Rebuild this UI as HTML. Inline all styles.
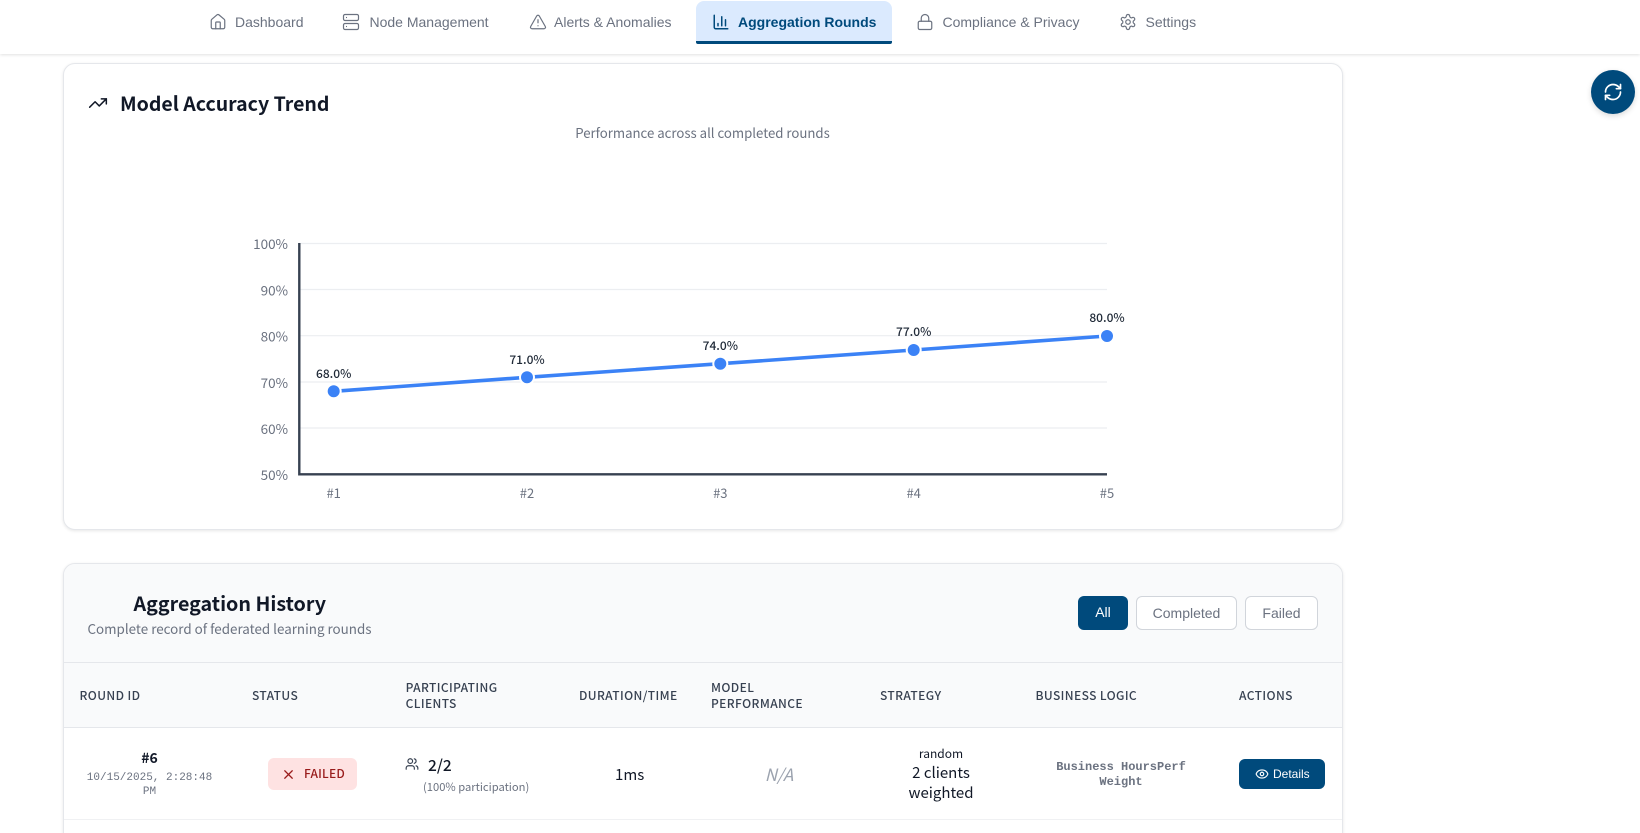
<!DOCTYPE html>
<html><head><meta charset="utf-8"><title>Aggregation Rounds</title>
<style>
html,body{margin:0;padding:0;background:#fff;width:1640px;height:833px;overflow:hidden}
body{position:relative;font-family:"Noto Sans CJK JP","Liberation Sans",sans-serif;color:#111827}
.t{position:absolute;white-space:nowrap;line-height:20px}
.c{transform:translateX(-50%)}
.n{font:14px/20px "Liberation Sans",Arial,sans-serif;color:#6b7280;top:12px}
.th{font-size:12px;font-weight:500;letter-spacing:.4px;color:#374151;line-height:16px}
.m{font-family:"Liberation Mono",monospace}
svg.i{position:absolute;fill:none;stroke:currentColor;stroke-width:2;stroke-linecap:round;stroke-linejoin:round}
.box{position:absolute;box-sizing:border-box}
.f{font:14px/32px "Liberation Sans",Arial,sans-serif;text-align:center;border-radius:6px;top:596px;height:34px}
</style></head><body>
<div class="box" style="left:0;top:0;width:1640px;height:54px;background:#fff;box-shadow:0 1px 3px rgba(0,0,0,.12);z-index:2"></div>
<div style="position:absolute;left:0;top:0;width:1640px;height:54px;z-index:3">
<div class="box" style="left:696px;top:1px;width:196px;height:43px;background:#dbeafe;border-radius:8px 8px 2px 2px;border-bottom:3px solid #004a7c"></div>
<svg class="i" style="left:209px;top:13px;color:#6b7280;stroke-width:1.6" width="18" height="18" viewBox="0 0 24 24"><path d="M15 21v-8a1 1 0 0 0-1-1h-4a1 1 0 0 0-1 1v8"/><path d="M3 10a2 2 0 0 1 .709-1.528l7-5.999a2 2 0 0 1 2.582 0l7 5.999A2 2 0 0 1 21 10v9a2 2 0 0 1-2 2H5a2 2 0 0 1-2-2z"/></svg>
<span class="t n" style="left:235px">Dashboard</span>
<svg class="i" style="left:342px;top:13px;color:#6b7280;stroke-width:1.6" width="18" height="18" viewBox="0 0 24 24"><rect x="2" y="2" width="20" height="8" rx="2"/><rect x="2" y="14" width="20" height="8" rx="2"/><path d="M6 6h.01M6 18h.01"/></svg>
<span class="t n" style="left:369.5px">Node Management</span>
<svg class="i" style="left:529px;top:13px;color:#6b7280;stroke-width:1.6" width="18" height="18" viewBox="0 0 24 24"><path d="m21.73 18-8-14a2 2 0 0 0-3.48 0l-8 14A2 2 0 0 0 4 21h16a2 2 0 0 0 1.73-3"/><path d="M12 9v4M12 17h.01"/></svg>
<span class="t n" style="left:554px">Alerts &amp; Anomalies</span>
<svg class="i" style="left:712px;top:13px;color:#004a7c" width="18" height="18" viewBox="0 0 24 24"><path d="M3 3v16a2 2 0 0 0 2 2h16"/><path d="M8 17v-3M13 17V5M18 17V9"/></svg>
<span class="t n" style="left:738px;color:#004a7c;font-weight:700">Aggregation Rounds</span>
<svg class="i" style="left:916px;top:13px;color:#6b7280;stroke-width:1.6" width="18" height="18" viewBox="0 0 24 24"><rect x="3" y="11" width="18" height="11" rx="2"/><path d="M7 11V7a5 5 0 0 1 10 0v4"/></svg>
<span class="t n" style="left:942.5px">Compliance &amp; Privacy</span>
<svg class="i" style="left:1119px;top:13px;color:#6b7280;stroke-width:1.6" width="18" height="18" viewBox="0 0 24 24"><path d="M12.22 2h-.44a2 2 0 0 0-2 2v.18a2 2 0 0 1-1 1.73l-.43.25a2 2 0 0 1-2 0l-.15-.08a2 2 0 0 0-2.73.73l-.22.38a2 2 0 0 0 .73 2.73l.15.1a2 2 0 0 1 1 1.72v.51a2 2 0 0 1-1 1.74l-.15.09a2 2 0 0 0-.73 2.73l.22.38a2 2 0 0 0 2.73.73l.15-.08a2 2 0 0 1 2 0l.43.25a2 2 0 0 1 1 1.73V20a2 2 0 0 0 2 2h.44a2 2 0 0 0 2-2v-.18a2 2 0 0 1 1-1.73l.43-.25a2 2 0 0 1 2 0l.15.08a2 2 0 0 0 2.73-.73l.22-.39a2 2 0 0 0-.73-2.73l-.15-.08a2 2 0 0 1-1-1.74v-.5a2 2 0 0 1 1-1.74l.15-.09a2 2 0 0 0 .73-2.73l-.22-.38a2 2 0 0 0-2.73-.73l-.15.08a2 2 0 0 1-2 0l-.43-.25a2 2 0 0 1-1-1.73V4a2 2 0 0 0-2-2z"/><circle cx="12" cy="12" r="3"/></svg>
<span class="t n" style="left:1145.5px">Settings</span>
</div>

<div class="box" style="left:1591px;top:70px;width:44px;height:44px;border-radius:50%;background:#004a7c;box-shadow:0 2px 6px rgba(0,0,0,.15)"></div>
<svg class="i" style="left:1603px;top:82px;color:#fff" width="20" height="20" viewBox="0 0 24 24"><path d="M3 12a9 9 0 0 1 9-9 9.75 9.75 0 0 1 6.74 2.74L21 8"/><path d="M21 3v5h-5"/><path d="M21 12a9 9 0 0 1-9 9 9.75 9.75 0 0 1-6.74-2.74L3 16"/><path d="M8 16H3v5"/></svg>

<!-- chart card -->
<div class="box" style="left:63px;top:63px;width:1280px;height:467px;background:#fff;border:1px solid #e5e7eb;border-radius:12px;box-shadow:0 1px 3px rgba(0,0,0,.1)"></div>
<svg class="i" style="left:88px;top:93px;color:#111827;stroke-width:1.8" width="20" height="20" viewBox="0 0 24 24"><path d="M22 7 13.5 15.5 8.5 10.5 2 17"/><path d="M16 7h6v6"/></svg>
<span class="t" style="left:120px;top:90.5px;font-size:19.5px;font-weight:700;line-height:24px">Model Accuracy Trend</span>
<span class="t c" style="left:702.5px;top:123px;font-size:13.2px;color:#6b7280">Performance across all completed rounds</span>

<svg style="position:absolute;left:0;top:0" width="1640" height="833" font-family="Noto Sans CJK JP,Liberation Sans,sans-serif">
<g stroke="#eceef1" stroke-width="1.2"><path d="M299 243.5H1107M299 289.5H1107M299 335.7H1107M299 382H1107M299 428H1107"/></g>
<path d="M299.3 243V474.3H1107" fill="none" stroke="#374151" stroke-width="2.4"/>
<polyline points="333.7,391.3 527,377.3 720.3,363.7 913.7,350 1107,336" fill="none" stroke="#3b82f6" stroke-width="3.6"/>
<g fill="#3b82f6" stroke="#fff" stroke-width="2"><circle cx="333.7" cy="391.3" r="7"/><circle cx="527" cy="377.3" r="7"/><circle cx="720.3" cy="363.7" r="7"/><circle cx="913.7" cy="350" r="7"/><circle cx="1107" cy="336" r="7"/></g>
<g font-size="13.5" fill="#6b7280" text-anchor="end"><text x="288" y="249">100%</text><text x="288" y="295.5">90%</text><text x="288" y="341.5">80%</text><text x="288" y="388">70%</text><text x="288" y="434">60%</text><text x="288" y="480">50%</text></g>
<g font-size="13" fill="#6b7280" text-anchor="middle"><text x="333.7" y="498">#1</text><text x="527" y="498">#2</text><text x="720.3" y="498">#3</text><text x="913.7" y="498">#4</text><text x="1107" y="498">#5</text></g>
<g font-size="12" font-weight="500" fill="#1f2937" text-anchor="middle"><text x="333.7" y="378">68.0%</text><text x="527" y="364">71.0%</text><text x="720.3" y="350">74.0%</text><text x="913.7" y="336">77.0%</text><text x="1107" y="322">80.0%</text></g>
</svg>

<!-- history card -->
<div class="box" style="left:63px;top:563px;width:1280px;height:290px;background:#fff;border:1px solid #e5e7eb;border-radius:12px;box-shadow:0 1px 3px rgba(0,0,0,.1);overflow:hidden">
<div class="box" style="left:0;top:0;width:100%;height:163px;background:#f9fafb"></div>
<div class="box" style="left:0;top:98px;width:100%;height:1px;background:#e5e7eb"></div>
<div class="box" style="left:0;top:163px;width:100%;height:1px;background:#e5e7eb"></div>
<div class="box" style="left:0;top:255px;width:100%;height:1px;background:#f0f1f3"></div>
</div>
<span class="t" style="left:133.5px;top:591px;font-size:19.7px;font-weight:700;line-height:24px">Aggregation History</span>
<span class="t" style="left:87.5px;top:618px;font-size:13.4px;color:#6b7280">Complete record of federated learning rounds</span>
<div class="box f" style="left:1078px;width:50px;background:#004a7c;color:#fff">All</div>
<div class="box f" style="left:1136px;width:101px;background:#fff;border:1px solid #d1d5db;color:#6b7280">Completed</div>
<div class="box f" style="left:1245px;width:73px;background:#fff;border:1px solid #d1d5db;color:#6b7280">Failed</div>

<span class="t th" style="left:79.5px;top:688px">ROUND ID</span>
<span class="t th" style="left:252px;top:688px">STATUS</span>
<span class="t th" style="left:405.6px;top:680px">PARTICIPATING</span>
<span class="t th" style="left:405.6px;top:696px">CLIENTS</span>
<span class="t th" style="left:579px;top:688px">DURATION/TIME</span>
<span class="t th" style="left:711px;top:680px">MODEL</span>
<span class="t th" style="left:711px;top:696px">PERFORMANCE</span>
<span class="t th" style="left:880px;top:688px">STRATEGY</span>
<span class="t th" style="left:1035.5px;top:688px">BUSINESS LOGIC</span>
<span class="t th" style="left:1239px;top:688px">ACTIONS</span>

<span class="t c" style="left:149.5px;top:748px;font-size:14px;font-weight:700">#6</span>
<span class="t c m" style="left:149.5px;top:767.5px;font-size:11px;color:#6b7280">10/15/2025, 2:28:48</span>
<span class="t c m" style="left:149.5px;top:781.5px;font-size:11px;color:#6b7280">PM</span>
<div class="box" style="left:268px;top:758px;width:89px;height:32px;background:#fee2e2;border-radius:6px"></div>
<svg class="i" style="left:280.5px;top:766.5px;color:#991b1b" width="15" height="15" viewBox="0 0 24 24"><path d="M18 6 6 18"/><path d="m6 6 12 12"/></svg>
<span class="t" style="left:304px;top:764px;font-size:12px;font-weight:500;letter-spacing:.2px;color:#991b1b">FAILED</span>
<svg class="i" style="left:405px;top:757px;color:#374151" width="14" height="14" viewBox="0 0 24 24"><path d="M16 21v-2a4 4 0 0 0-4-4H6a4 4 0 0 0-4 4v2"/><circle cx="9" cy="7" r="4"/><path d="M22 21v-2a4 4 0 0 0-3-3.87"/><path d="M16 3.13a4 4 0 0 1 0 7.75"/></svg>
<span class="t" style="left:428px;top:754.5px;font-size:15.5px;font-weight:500">2/2</span>
<span class="t" style="left:423px;top:777px;font-size:11.2px;color:#6b7280">(100% participation)</span>
<span class="t" style="left:615px;top:765px;font-size:15px">1ms</span>
<span class="t c" style="left:779px;top:764px;font-size:17px;font-style:italic;color:#9ca3af">N/A</span>
<span class="t c" style="left:941px;top:744px;font-size:12px">random</span>
<span class="t c" style="left:941px;top:763px;font-size:15px">2 clients</span>
<span class="t c" style="left:941px;top:783px;font-size:15px">weighted</span>
<span class="t c m" style="left:1121px;top:757px;font-size:12px;font-weight:700;color:#6b7280">Business HoursPerf</span>
<span class="t c m" style="left:1121px;top:772px;font-size:12px;font-weight:700;color:#6b7280">Weight</span>
<div class="box" style="left:1239px;top:759px;width:86px;height:30px;background:#004a7c;border-radius:6px"></div>
<svg class="i" style="left:1255px;top:767px;color:#fff" width="14" height="14" viewBox="0 0 24 24"><path d="M2.062 12.348a1 1 0 0 1 0-.696 10.75 10.75 0 0 1 19.876 0 1 1 0 0 1 0 .696 10.75 10.75 0 0 1-19.876 0"/><circle cx="12" cy="12" r="3"/></svg>
<span class="t" style="left:1273px;top:764px;font:12px/20px 'Liberation Sans',Arial,sans-serif;color:#fff">Details</span>
</body></html>
